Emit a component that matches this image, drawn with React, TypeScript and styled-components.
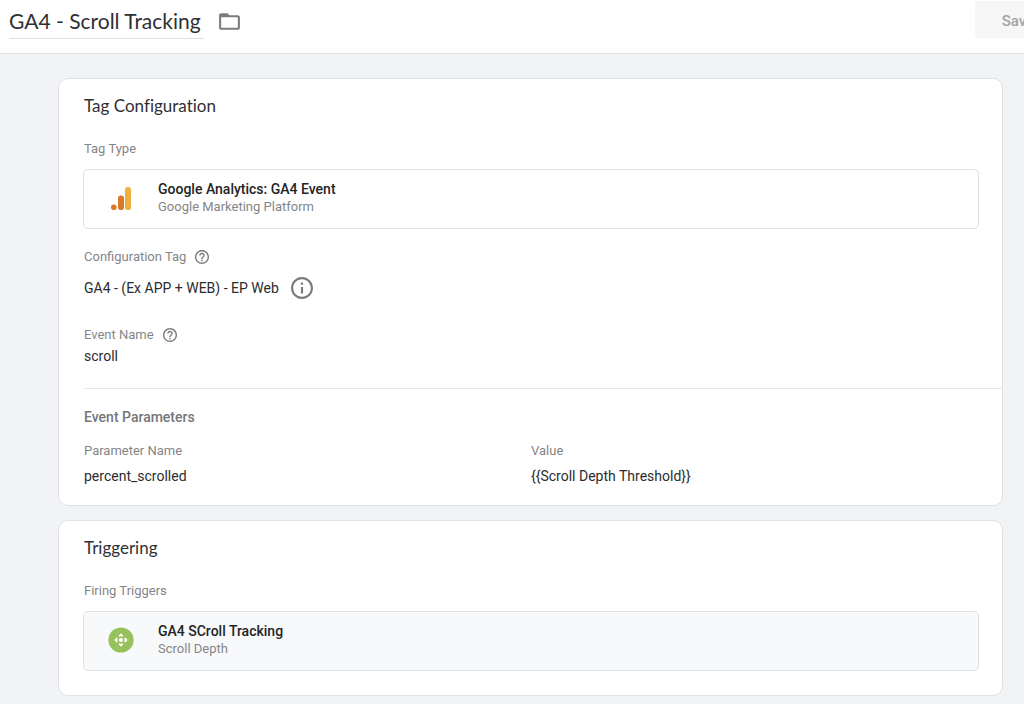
import React from "react";
import styled, { createGlobalStyle } from "styled-components";

const GlobalStyle = createGlobalStyle`
  *, *::before, *::after { box-sizing: border-box; }
  body {
    margin: 0;
    min-height: 100vh;
    overflow-x: hidden;
    background: #f1f3f4;
    color: #2b2c2e;
    font-family: Roboto, sans-serif;
    font-size: 14px;
    line-height: 20px;
  }
  button, input { font-family: inherit; }
`;

const Header = styled.header`
  display: flex;
  align-items: flex-start;
  height: 54px;
  padding-left: 9px;
  overflow: hidden;
  background: #fff;
  border-bottom: 1px solid #dfe2e5;
`;

const TitleInput = styled.input`
  width: 195px;
  height: 39px;
  margin: 0 13px 0 0;
  padding: 2px 0 0;
  border: 0;
  border-bottom: 1px solid #dfe0e2;
  background: transparent;
  color: #2f3033;
  font-family: Lato, sans-serif;
  font-size: 21px;
  font-variant-ligatures: none;
  line-height: 28px;
`;

const IconButton = styled.button`
  display: inline-flex;
  align-items: center;
  justify-content: center;
  flex: none;
  margin: 0;
  padding: 0;
  border: 0;
  background: none;
  color: #7b7c7e;
  cursor: pointer;
`;

const FolderButton = styled(IconButton)`
  height: 42px;
`;

const SaveButton = styled.button`
  flex: none;
  width: 86px;
  height: 37px;
  margin: 1px -37px 0 auto;
  padding: 2px 0 0;
  border: 0;
  border-radius: 4px;
  background: #f6f6f6;
  color: #a2a3a4;
  font-size: 15px;
  font-weight: 500;
`;

const Main = styled.main`
  display: flex;
  flex-direction: column;
  gap: 14px;
  padding: 24px 21px 8px 58px;
`;

const Card = styled.section`
  padding: 15px 0 24px 25px;
  border: 1px solid #dfe1e5;
  border-radius: 10px;
  background: #fff;
`;

const CardTitle = styled.h2`
  margin: 0 0 21px;
  color: #2f3033;
  font-family: Lato, sans-serif;
  font-size: 17px;
  font-variant-ligatures: none;
  font-weight: 400;
  line-height: 24px;
`;

const Label = styled.div`
  display: flex;
  align-items: center;
  gap: 9px;
  color: #858688;
  font-size: 13px;
  line-height: 20px;
`;

const Value = styled.div`
  display: flex;
  align-items: center;
  gap: 12px;
  font-size: 14px;
  line-height: 20px;
`;

const Choice = styled.div<{ $tinted?: boolean }>`
  display: flex;
  align-items: center;
  height: 60px;
  margin: 10px 23px 0 -1px;
  padding-bottom: 2px;
  border: 1px solid #dfe1e5;
  border-radius: 5px;
  background: ${(p) => (p.$tinted ? "#f8f9fb" : "#fff")};
`;

const ChoiceIcon = styled.div`
  display: flex;
  justify-content: center;
  flex: none;
  width: 74px;
`;

const ChoiceName = styled.div`
  color: #232426;
  font-size: 14px;
  font-weight: 500;
  line-height: 18px;
`;

const ChoiceKind = styled.div`
  color: #858688;
  font-size: 13px;
  line-height: 18px;
`;

const Field = styled.div<{ $top: number; $gap: number }>`
  display: flex;
  flex-direction: column;
  gap: ${(p) => p.$gap}px;
  margin-top: ${(p) => p.$top}px;
`;

const Parameters = styled.div`
  margin-top: 22px;
  padding-top: 18px;
  border-top: 1px solid #e6e7e9;
`;

const SubTitle = styled.h3`
  margin: 0 0 14px;
  color: #757678;
  font-size: 14px;
  font-weight: 500;
  line-height: 20px;
`;

const Table = styled.table`
  width: 100%;
  table-layout: fixed;
  border-collapse: collapse;
  margin-bottom: -5px;

  th, td {
    padding: 0;
    text-align: left;
    font-weight: 400;
    line-height: 20px;
  }
  th:first-child { width: 447px; }
  th { color: #858688; font-size: 13px; padding-bottom: 5px; }
  td { font-size: 14px; }
`;

const FolderIcon = () => (
  <svg width="25" height="25" viewBox="0 0 24 24" fill="currentColor" aria-hidden="true">
    <path d="M20 6h-8l-2-2H4c-1.100 0-2 .9-2 2v12c0 1.100.9 2 2 2h16c1.100 0 2-.9 2-2V8c0-1.100-.9-2-2-2zm0 12H4V8h16v10z" />
  </svg>
);

const HelpIcon = () => (
  <svg width="14" height="14" viewBox="2 2 20 20" fill="currentColor" aria-hidden="true">
    <path d="M11 18h2v-2h-2v2zm1-16C6.480 2 2 6.480 2 12s4.480 10 10 10 10-4.480 10-10S17.520 2 12 2zm0 18c-4.410 0-8-3.590-8-8s3.590-8 8-8 8 3.590 8 8-3.590 8-8 8zm0-14c-2.210 0-4 1.790-4 4h2c0-1.100.9-2 2-2s2 .9 2 2c0 2-3 1.750-3 5h2c0-2.250 3-2.500 3-5 0-2.210-1.790-4-4-4z" />
  </svg>
);

const InfoIcon = () => (
  <svg width="22" height="22" viewBox="2 2 20 20" fill="currentColor" aria-hidden="true">
    <path d="M11 7h2v2h-2zm0 4h2v6h-2zm1-9C6.480 2 2 6.480 2 12s4.480 10 10 10 10-4.480 10-10S17.520 2 12 2zm0 18c-4.410 0-8-3.590-8-8s3.590-8 8-8 8 3.590 8 8-3.590 8-8 8z" />
  </svg>
);

const AnalyticsIcon = () => (
  <svg width="22" height="24" viewBox="0 0 22 24" aria-hidden="true">
    <rect x="15" y="1" width="6" height="23" rx="2.800" fill="#efb03f" />
    <rect x="8" y="9.500" width="6" height="14.500" rx="2.800" fill="#d97a2b" />
    <circle cx="3.800" cy="21.200" r="2.800" fill="#d97a2b" />
  </svg>
);

const ARROW = "M13 6.200l2.400 2.600-.7 1L13 9.300l-1.700.5-.7-1z";

const ScrollIcon = () => (
  <svg width="26" height="26" viewBox="0 0 26 26" aria-hidden="true">
    <circle cx="13" cy="13" r="12.600" fill="#97c15c" />
    <circle cx="13" cy="13" r="2.100" fill="#fff" />
    {[0, 90, 180, 270].map((angle) => (
      <path key={angle} d={ARROW} fill="#fff" transform={`rotate(${angle} 13 13)`} />
    ))}
  </svg>
);

export default function App() {
  return (
    <>
      <GlobalStyle />
      <Header>
        <TitleInput aria-label="Tag name" defaultValue="GA4 - Scroll Tracking" />
        <FolderButton type="button" aria-label="Move to folder">
          <FolderIcon />
        </FolderButton>
        <SaveButton type="button" disabled>Save</SaveButton>
      </Header>
      <Main>
        <Card>
          <CardTitle>Tag Configuration</CardTitle>
          <Label>Tag Type</Label>
          <Choice>
            <ChoiceIcon><AnalyticsIcon /></ChoiceIcon>
            <div>
              <ChoiceName>Google Analytics: GA4 Event</ChoiceName>
              <ChoiceKind>Google Marketing Platform</ChoiceKind>
            </div>
          </Choice>
          <Field $top={18} $gap={10}>
            <Label>
              Configuration Tag
              <IconButton type="button" aria-label="About configuration tag"><HelpIcon /></IconButton>
            </Label>
            <Value>
              GA4 - (Ex APP + WEB) - EP Web
              <IconButton type="button" aria-label="Tag details"><InfoIcon /></IconButton>
            </Value>
          </Field>
          <Field $top={26} $gap={1}>
            <Label>
              Event Name
              <IconButton type="button" aria-label="About event name"><HelpIcon /></IconButton>
            </Label>
            <Value>scroll</Value>
          </Field>
          <Parameters>
            <SubTitle>Event Parameters</SubTitle>
            <Table>
              <thead>
                <tr><th scope="col">Parameter Name</th><th scope="col">Value</th></tr>
              </thead>
              <tbody>
                <tr><td>percent_scrolled</td><td>{"{{Scroll Depth Threshold}}"}</td></tr>
              </tbody>
            </Table>
          </Parameters>
        </Card>
        <Card>
          <CardTitle>Triggering</CardTitle>
          <Label>Firing Triggers</Label>
          <Choice $tinted>
            <ChoiceIcon><ScrollIcon /></ChoiceIcon>
            <div>
              <ChoiceName>GA4 SCroll Tracking</ChoiceName>
              <ChoiceKind>Scroll Depth</ChoiceKind>
            </div>
          </Choice>
        </Card>
      </Main>
    </>
  );
}
